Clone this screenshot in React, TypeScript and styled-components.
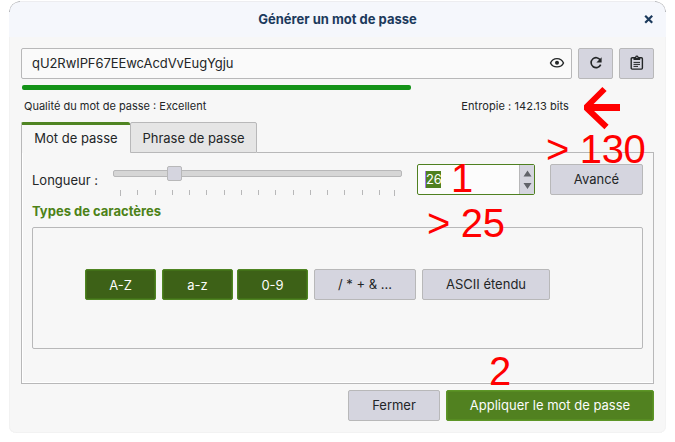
import React from "react";
import styled, { createGlobalStyle, css } from "styled-components";

const line = "#b8b8b9";
const green = "#4f8020";

const GlobalStyle = createGlobalStyle`
  * { box-sizing: border-box; }
  body {
    margin: 0;
    background: #fff;
    color: #232627;
    font-family: Inter, "Liberation Sans", sans-serif;
    font-size: 13px;
    letter-spacing: 0;
    overflow: hidden;
  }
  button { font: inherit; letter-spacing: inherit; color: inherit; padding: 0; margin: 0; }
`;

const Stage = styled.main`
  position: relative;
  width: 675px;
  height: 442px;
  padding: 1px 9px 9px;
`;

const Dialog = styled.section`
  width: 657px;
  height: 432px;
  background: #f7f7f7;
  border-radius: 12px 12px 7px 7px;
  box-shadow: inset 1px 0 #f2f2f2, inset -1px 0 #f3f3f3, inset 0 -1px #f2f2f2;
  overflow: hidden;
`;

const TitleBar = styled.header`
  position: relative;
  display: grid;
  grid-template-columns: 36px 1fr 36px;
  align-items: center;
  height: 36px;
  padding-bottom: 1px;
  background: #f5f7fc;
  border-top: 1px solid #ededf0;
  border-radius: 12px 12px 0 0;
  color: #1c3a5c;
  &::before, &::after {
    content: "";
    position: absolute;
    top: -1px;
    width: 10px;
    height: 10px;
    border-top: 1px solid #b4b5b8;
  }
  &::before { left: 0; border-left: 1px solid #b4b5b8; border-radius: 10px 0 0 0; }
  &::after { right: 0; border-right: 1px solid #b4b5b8; border-radius: 0 10px 0 0; }
`;

const Title = styled.h1`
  grid-column: 2;
  margin: 0;
  padding-bottom: 1px;
  text-align: center;
  font-size: 13px;
  font-weight: 700;
`;

const CloseButton = styled.button`
  display: grid;
  place-items: center;
  height: 34px;
  padding-left: 1px;
  border: 0;
  background: none;
`;

const Content = styled.div`
  padding: 11px 12px 0;
`;

const PasswordRow = styled.div`
  display: flex;
  gap: 6px;
`;

const PasswordField = styled.div`
  display: flex;
  align-items: center;
  justify-content: space-between;
  width: 551px;
  height: 31px;
  padding: 0 6px 1px 10px;
  border: 1px solid ${line};
  border-radius: 2px;
  background: #fafafa;
`;

const PasswordText = styled.span`
  letter-spacing: -0.07px;
`;

const Button = styled.button<{ $w: number; $kind?: "on" | "primary" }>`
  display: flex;
  align-items: center;
  justify-content: center;
  width: ${(p) => p.$w}px;
  height: 31px;
  padding-bottom: 1px;
  border: 1px solid ${line};
  border-radius: 2px;
  background: #d5d5df;
  ${(p) => p.$kind === "on" && css`
    border-color: #4f8422;
    background: #3d6117;
    color: #fcfcfc;
    padding: 1px 0 0;
    box-shadow: inset 0 0 0 1px #427018;
  `}
  ${(p) => p.$kind === "primary" && css`
    border-color: #5d9627;
    background: #518120;
    color: #fcfcfc;
    box-shadow: inset 0 0 0 1px #578c22;
  `}
`;

const QualityBar = styled.div`
  width: 389px;
  height: 5px;
  margin: 6px 0 0 1px;
  border-radius: 2px;
  background: #149318;
`;

const QualityRow = styled.div`
  display: flex;
  justify-content: space-between;
  height: 32px;
  padding: 9px 85px 0 3px;
  font-size: 11px;
  line-height: 14px;
`;

const Entropy = styled.span`
  letter-spacing: 0.08px;
`;

const Tabs = styled.div`
  display: flex;
  height: 31px;
`;

const Tab = styled.div<{ $active?: boolean; $w: number }>`
  display: flex;
  align-items: center;
  justify-content: center;
  width: ${(p) => p.$w}px;
  height: 31px;
  border: 1px solid ${line};
  border-radius: 2px 2px 0 0;
  background: #e5e5e5;
  padding-top: 1px;
  ${(p) => p.$active && css`
    border-top: 3px solid #4f8422;
    border-right: 0;
    border-bottom: 0;
    background: #f7f7f7;
    padding: 0 0 2px;
  `}
`;

const TabFill = styled.div`
  flex: 1;
  border-bottom: 1px solid ${line};
`;

const Panel = styled.div`
  height: 231px;
  padding: 11px 10px 0;
  border: 1px solid ${line};
  border-top: 0;
  box-shadow: inset 1px -1px #fff;
`;

const LengthRow = styled.div`
  display: flex;
  height: 31px;
`;

const LengthLabel = styled.label`
  width: 81px;
  padding-top: 1px;
  line-height: 31px;
`;

const Slider = styled.div`
  width: 289px;
  padding-top: 2px;
  margin-right: 15px;
`;

const Rail = styled.div`
  display: flex;
  align-items: center;
  width: 289px;
  height: 7px;
  margin-top: 4px;
  padding-left: 53px;
  border: 1px solid ${line};
  border-radius: 2px;
  background: #d6d6d6;
`;

const Thumb = styled.div`
  flex: none;
  width: 15px;
  height: 15px;
  border: 1px solid ${line};
  border-radius: 2px;
  background: #d5d5df;
`;

const Ticks = styled.svg`
  display: block;
  width: 289px;
  height: 6px;
  margin-top: 13px;
`;

const SpinBox = styled.div`
  display: flex;
  justify-content: space-between;
  width: 118px;
  height: 31px;
  margin-right: 15px;
  border: 1px solid ${green};
  border-radius: 2px;
  background: #fcfcfc;
`;

const Selection = styled.span`
  width: 16px;
  height: 17px;
  margin: 6px 0 0 7px;
  border-left: 1px solid #a978e8;
  background: ${green};
  color: #fff;
  line-height: 17px;
  letter-spacing: -0.3px;
`;

const Steppers = styled.div`
  display: grid;
  place-items: center;
  width: 15px;
  border-left: 1px solid ${line};
  background: #d5d5df;
`;

const GroupTitle = styled.h2`
  height: 32px;
  margin: 0;
  padding: 8px 0 0;
  color: #4d8218;
  font-size: 13px;
  line-height: 17px;
  font-weight: 700;
`;

const CharacterGroup = styled.div`
  display: flex;
  align-items: center;
  gap: 6px;
  height: 122px;
  padding: 0 0 7px 52px;
  border: 1px solid ${line};
  border-radius: 2px;
`;

const LetterToggles = styled.div`
  display: grid;
  grid-template-columns: 77px 75px 71px;
`;

const Footer = styled.footer`
  display: flex;
  justify-content: flex-end;
  gap: 6px;
  padding-top: 6px;
`;

const Note = styled.span<{ $x: number; $y: number }>`
  position: absolute;
  left: ${(p) => p.$x}px;
  top: ${(p) => p.$y}px;
  color: #f00;
  font: 40px/44px "Liberation Sans", Arial, sans-serif;
  letter-spacing: -0.35px;
  white-space: nowrap;
`;

const NoteArrow = styled.svg`
  position: absolute;
  left: 584px;
  top: 86px;
`;

const tickPositions = [7, 24, 42, 59, 76, 93, 111, 128, 145, 162, 180, 197, 214, 231, 249, 266, 281];

export default function App() {
  return (
    <Stage>
      <GlobalStyle />
      <Dialog>
        <TitleBar>
          <Title>Générer un mot de passe</Title>
          <CloseButton aria-label="Fermer la fenêtre">
            <svg width="10" height="10" viewBox="0 0 10 10">
              <path d="M1.2 1.7 8.2 8.7M8.2 1.7 1.2 8.7" stroke="currentColor" strokeWidth="2.2" />
            </svg>
          </CloseButton>
        </TitleBar>
        <Content>
          <PasswordRow>
            <PasswordField>
              <PasswordText>qU2RwIPF67EEwcAcdVvEugYgju</PasswordText>
              <svg width="16" height="16" viewBox="0 0 16 16" fill="none" stroke="#232627">
                <path d="M1.5 8C4 2.2 12 2.2 14.5 8 12 13.2 4 13.2 1.5 8Z" strokeWidth="1.4" />
                <circle cx="8" cy="7.8" r="2" fill="#232627" stroke="none" />
              </svg>
            </PasswordField>
            <Button $w={35} aria-label="Régénérer">
              <svg width="16" height="16" viewBox="0 0 16 16" fill="none" stroke="#232627">
                <path d="M12.4 5.1A5 5 0 1 0 12.7 9.6" strokeWidth="1.6" />
                <path d="M13.6 2.2v5.2H8.4Z" fill="#232627" stroke="none" />
              </svg>
            </Button>
            <Button $w={35} aria-label="Copier">
              <svg width="16" height="16" viewBox="0 0 16 16" fill="none" stroke="#232627">
                <rect x="2.2" y="2.7" width="11.2" height="11.4" rx="1" strokeWidth="1.4" />
                <path d="M4.5 2h1.6a1.8 1.8 0 0 1 3.5 0h1.6v3H4.5Z" fill="#232627" stroke="none" />
                <circle cx="7.9" cy="2.4" r=".6" fill="#d5d5df" stroke="none" />
                <path d="M4.5 7.4H11M4.5 9.4H11M4.5 11.4H9" strokeWidth="1" />
              </svg>
            </Button>
          </PasswordRow>
          <QualityBar />
          <QualityRow>
            <span>Qualité du mot de passe : Excellent</span>
            <Entropy>Entropie : 142.13 bits</Entropy>
          </QualityRow>
          <Tabs>
            <Tab $active $w={109}>Mot de passe</Tab>
            <Tab $w={127}>Phrase de passe</Tab>
            <TabFill />
          </Tabs>
          <Panel>
            <LengthRow>
              <LengthLabel>Longueur :</LengthLabel>
              <Slider>
                <Rail><Thumb /></Rail>
                <Ticks>
                  {tickPositions.map((x, i) => (
                    <rect key={x} x={x} y="0" width="1" height={i === 0 || i === 16 ? 6 : 5} fill={line} />
                  ))}
                </Ticks>
              </Slider>
              <SpinBox>
                <Selection>26</Selection>
                <Steppers>
                  <svg width="9" height="21" viewBox="0 0 9 21" fill="#61636a">
                    <path d="M.5 7.5 4.5 1.5 8.5 7.5ZM.5 14 4.5 20 8.5 14Z" />
                  </svg>
                </Steppers>
              </SpinBox>
              <Button $w={93}>Avancé</Button>
            </LengthRow>
            <GroupTitle>Types de caractères</GroupTitle>
            <CharacterGroup>
              <LetterToggles>
                <Button $w={71} $kind="on">A-Z</Button>
                <Button $w={71} $kind="on">a-z</Button>
                <Button $w={71} $kind="on">0-9</Button>
              </LetterToggles>
              <Button $w={102}>/ * + &amp; ...</Button>
              <Button $w={128}>ASCII étendu</Button>
            </CharacterGroup>
          </Panel>
          <Footer>
            <Button $w={92}>Fermer</Button>
            <Button $w={208} $kind="primary">Appliquer le mot de passe</Button>
          </Footer>
        </Content>
      </Dialog>
      <NoteArrow width="36" height="44" viewBox="0 0 36 44" fill="none" stroke="#f00">
        <path d="M36 21.5H2" strokeWidth="7" />
        <path d="M20.5 3 2 21.5 22.5 41" strokeWidth="6" />
      </NoteArrow>
      <Note $x={546} $y={127}>&gt; 130</Note>
      <Note $x={451} $y={156}>1</Note>
      <Note $x={427} $y={201}>&gt; 25</Note>
      <Note $x={489} $y={349}>2</Note>
    </Stage>
  );
}
